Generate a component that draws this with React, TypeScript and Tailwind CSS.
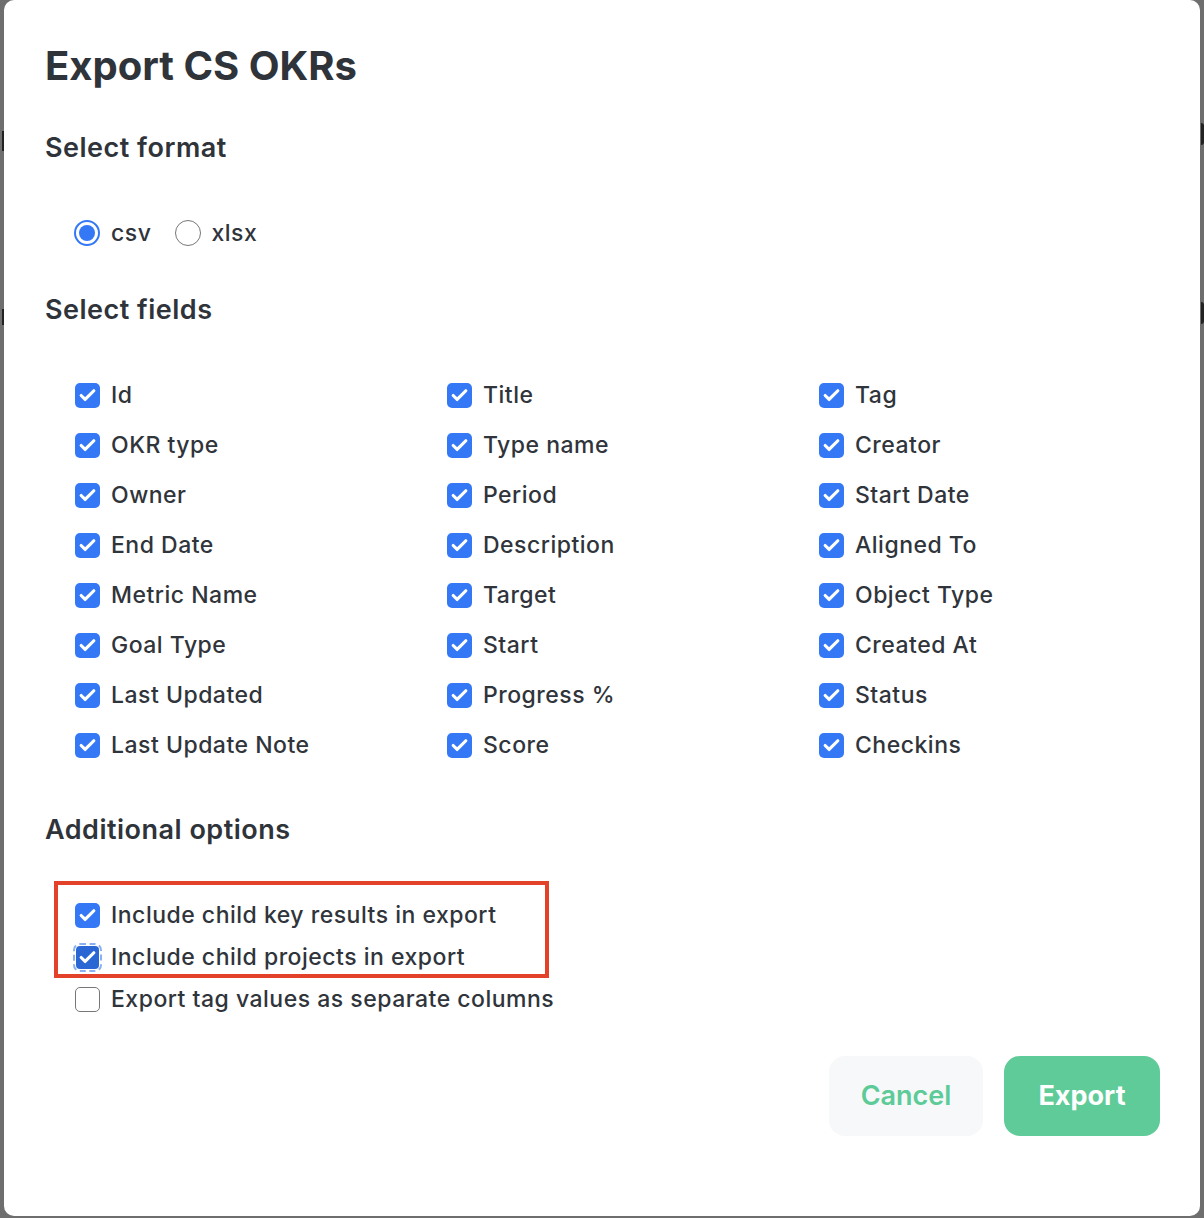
import { Check } from "lucide-react"

const fields = [
  ["Id", "Title", "Tag"],
  ["OKR type", "Type name", "Creator"],
  ["Owner", "Period", "Start Date"],
  ["End Date", "Description", "Aligned To"],
  ["Metric Name", "Target", "Object Type"],
  ["Goal Type", "Start", "Created At"],
  ["Last Updated", "Progress %", "Status"],
  ["Last Update Note", "Score", "Checkins"],
]

function Box({ checked = true, focused = false }: { checked?: boolean; focused?: boolean }) {
  if (!checked) {
    return (
      <span className="h-[25px] w-[25px] shrink-0 rounded-[5px] border-[1.5px] border-[#777] bg-white" />
    )
  }
  return (
    <span
      className={
        focused
          ? "flex h-[23px] w-[23px] shrink-0 items-center justify-center rounded-[4px] bg-[#2a66d4] outline-2 outline-offset-1 outline-dashed outline-[#8ab0f0]"
          : "flex h-[25px] w-[25px] shrink-0 items-center justify-center rounded-[5px] bg-[#3478f6]"
      }
    >
      <Check className="h-[19px] w-[19px] text-white" strokeWidth={4} />
    </span>
  )
}

function Row({ label, checked = true, focused = false }: { label: string; checked?: boolean; focused?: boolean }) {
  return (
    <div className="flex h-[42px] items-center">
      <span className="flex w-[26px] justify-center">
        <Box checked={checked} focused={focused} />
      </span>
      <span className="ml-[11px] text-[23px] tracking-[0.5px] font-medium text-[#30343b]">{label}</span>
    </div>
  )
}

export default function App() {
  return (
    <div
      className="relative h-[1218px] w-[1204px] bg-[#6e6e6e] pb-[2px] pl-[4px] pr-[4px]"
      style={{ fontFamily: "Inter, 'Noto Sans', sans-serif" }}
    >
      {/* bits of the page behind the dialog */}
      <span className="absolute left-[2px] top-[131px] h-[20px] w-[2px] bg-[#222]" />
      <span className="absolute left-[2px] top-[309px] h-[16px] w-[2px] bg-[#222]" />
      <span className="absolute right-0 top-[123px] h-[22px] w-[3px] rounded-r-full bg-[#222]" />
      <span className="absolute right-0 top-[302px] h-[22px] w-[3px] rounded-r-full bg-[#222]" />

      <div className="flex h-full flex-col rounded-[10px] bg-white pl-[41px] pr-[40px]">
        <h1 className="mt-[42px] h-[48px] text-[40px] leading-[48px] font-bold text-[#2f333a]">
          Export CS OKRs
        </h1>

        <h2 className="mt-[42px] h-[32px] text-[27px] tracking-[0.5px] leading-[32px] font-semibold text-[#2f333a]">
          Select format
        </h2>
        <div className="mt-[53px] flex h-[32px] items-center pl-[29px] text-[23px] tracking-[0.5px] font-medium text-[#30343b]">
          <span className="flex h-[26px] w-[26px] items-center justify-center rounded-full border-2 border-[#3478f6]">
            <span className="h-[16px] w-[16px] rounded-full bg-[#3478f6]" />
          </span>
          <span className="ml-[11px]">csv</span>
          <span className="ml-[24px] h-[26px] w-[26px] rounded-full border-[1.5px] border-[#777]" />
          <span className="ml-[10px]">xlsx</span>
        </div>

        <h2 className="mt-[45px] h-[32px] text-[27px] tracking-[0.5px] leading-[32px] font-semibold text-[#2f333a]">
          Select fields
        </h2>
        <div className="mt-[44px] grid grid-cols-[372px_372px_auto] pl-[29px]">
          {fields.flat().map(f => (
            <div key={f} className="flex h-[50px] items-center">
              <span className="flex w-[26px] justify-center">
                <Box />
              </span>
              <span className="ml-[11px] text-[23px] tracking-[0.5px] font-medium text-[#30343b]">{f}</span>
            </div>
          ))}
        </div>

        <h2 className="mt-[44px] h-[32px] text-[27px] tracking-[0.5px] leading-[32px] font-semibold text-[#2f333a]">
          Additional options
        </h2>
        <div className="relative mt-[48px] pl-[29px]">
          <Row label="Include child key results in export" />
          <Row label="Include child projects in export" focused />
          <Row label="Export tag values as separate columns" checked={false} />
          <span className="absolute left-[9px] top-[-13px] h-[97px] w-[495px] border-[4px] border-[#e4412b]" />
        </div>

        <div className="mt-[36px] flex justify-end gap-[21px]">
          <button
            type="button"
            className="h-[80px] w-[154px] rounded-[16px] bg-[#f7f8fa] text-[27px] font-semibold text-[#5ccb97]"
          >
            Cancel
          </button>
          <button
            type="button"
            className="h-[80px] w-[156px] rounded-[16px] bg-[#5ecb98] text-[27px] font-bold text-white"
          >
            Export
          </button>
        </div>
      </div>
    </div>
  )
}
